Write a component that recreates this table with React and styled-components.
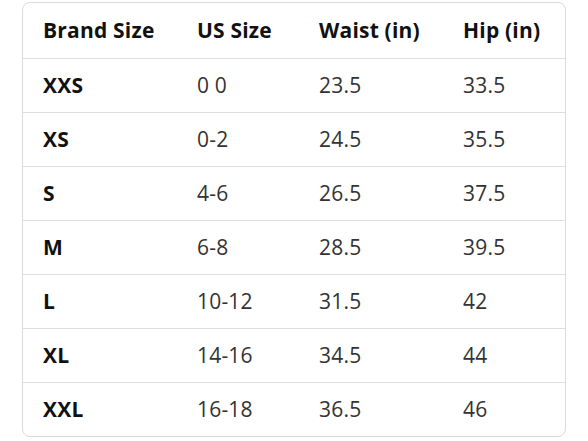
import React from 'react'
import styled, { createGlobalStyle } from 'styled-components'

const GlobalStyle = createGlobalStyle`
  html, body {
    margin: 0;
    padding: 0;
    background: #ffffff;
  }
`

const Page = styled.div`
  width: 588px;
  height: 441px;
  padding: 2px 0 0 22px;
  box-sizing: border-box;
`

const Table = styled.table`
  width: 542px;
  border-collapse: separate;
  border-spacing: 0;
  border: 1px solid #d9dcdc;
  border-radius: 8px;
  table-layout: fixed;
  font-family: 'Open Sans', 'Noto Sans', sans-serif;
  font-size: 21px;
  letter-spacing: 0.2px;
`

const Row = styled.tr`
  height: ${p => (p.$head ? 55 : 54)}px;
`

const Cell = styled.td`
  padding: 0 0 1px 20px;
  text-align: left;
  color: ${p => (p.$bold ? '#111111' : '#333333')};
  font-weight: ${p => (p.$bold ? 700 : 400)};
  border-top: ${p => (p.$first ? 'none' : '1px solid #dedfdf')};
  white-space: nowrap;
`

const Head = styled(Cell).attrs({ as: 'th' })``

const widths = [154, 122, 144, 122]
const headers = ['Brand Size', 'US Size', 'Waist (in)', 'Hip (in)']
const rows = [
  ['XXS', '0 0', '23.5', '33.5'],
  ['XS', '0-2', '24.5', '35.5'],
  ['S', '4-6', '26.5', '37.5'],
  ['M', '6-8', '28.5', '39.5'],
  ['L', '10-12', '31.5', '42'],
  ['XL', '14-16', '34.5', '44'],
  ['XXL', '16-18', '36.5', '46'],
]

export default function App() {
  return (
    <Page>
      <GlobalStyle />
      <Table>
        <colgroup>
          {widths.map((w, i) => (
            <col key={i} style={{ width: w }} />
          ))}
        </colgroup>
        <thead>
          <Row $head>
            {headers.map(h => (
              <Head key={h} $bold $first>
                {h}
              </Head>
            ))}
          </Row>
        </thead>
        <tbody>
          {rows.map(r => (
            <Row key={r[0]}>
              {r.map((c, i) => (
                <Cell key={i} $bold={i === 0}>
                  {c}
                </Cell>
              ))}
            </Row>
          ))}
        </tbody>
      </Table>
    </Page>
  )
}
